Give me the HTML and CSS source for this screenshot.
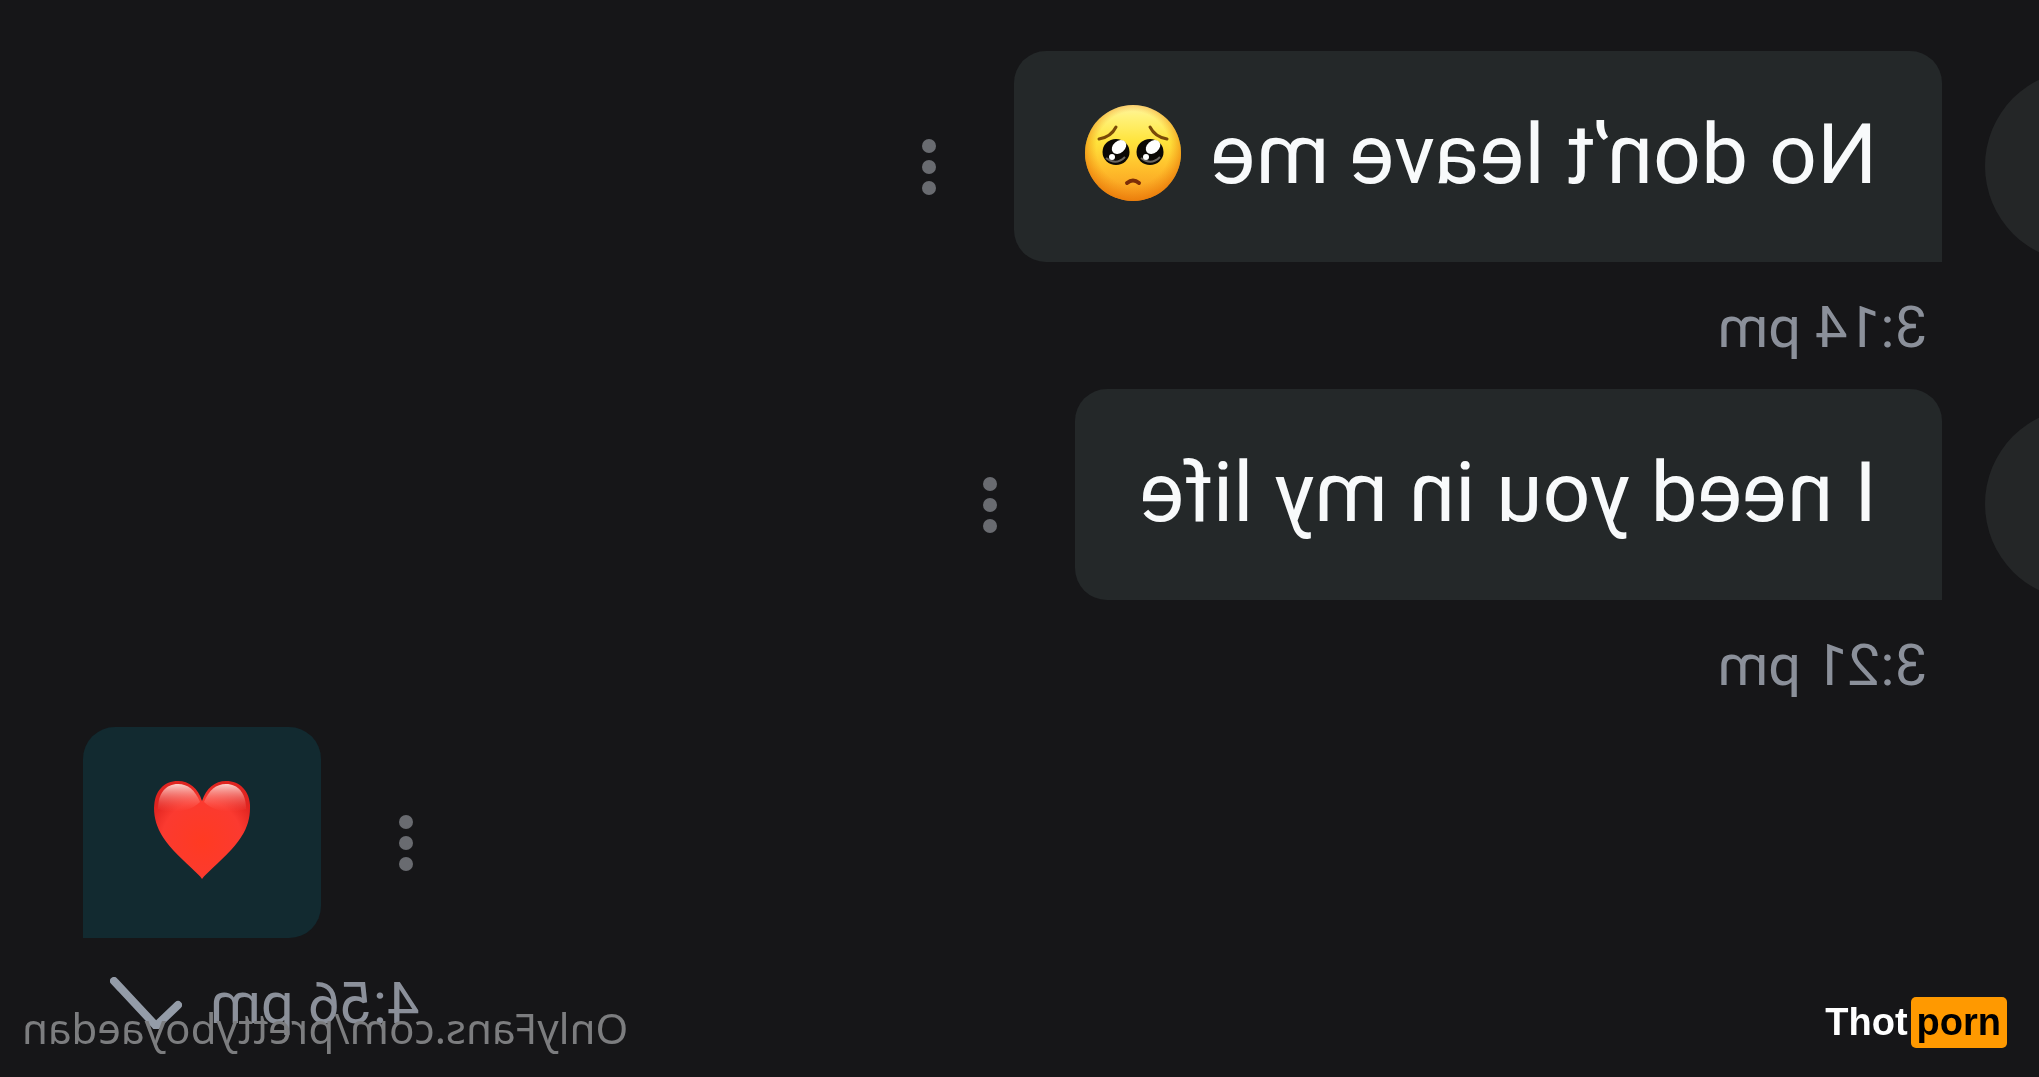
FILE: index.html
```
<!DOCTYPE html>
<html lang="en">
<head>
    <meta charset="UTF-8">
    <title>Messages</title>
    <link rel="stylesheet" href="styles.css">
</head>
<body>
    <main class="chat">
        <article class="message">
            <div class="row">
                <div class="avatar"></div>
                <div class="bubble">
                    <span>No don’t leave me</span>
                    <svg class="emoji" viewBox="0 0 96 96" role="img" aria-label="pleading face">
                        <defs>
                            <linearGradient id="face" x1="0" y1="0" x2="0" y2="1">
                                <stop offset="0" stop-color="#fff3a0"/>
                                <stop offset="0.12" stop-color="#fff27c"/>
                                <stop offset="0.38" stop-color="#ffe43c"/>
                                <stop offset="0.65" stop-color="#ffc02c"/>
                                <stop offset="1" stop-color="#f7941d"/>
                            </linearGradient>
                            <radialGradient id="rim" cx="0.5" cy="0.45" r="0.56">
                                <stop offset="0.68" stop-color="#f08a10" stop-opacity="0"/>
                                <stop offset="1" stop-color="#e87908" stop-opacity="0.9"/>
                            </radialGradient>
                        </defs>
                        <circle cx="48" cy="48" r="48" fill="url(#face)"/>
                        <circle cx="48" cy="48" r="48" fill="url(#rim)"/>
                        <path d="M14 34Q26 32 31 22M65 22Q70 32 82 34" fill="none" stroke="#7a4a08" stroke-width="3" stroke-linecap="round"/>
                        <ellipse cx="31" cy="47" rx="13.5" ry="13" fill="#0b0805"/>
                        <ellipse cx="65" cy="47" rx="13.5" ry="13" fill="#0b0805"/>
                        <path d="M21 52Q30 61 40 53M56 52Q65 61 75 53" fill="none" stroke="#6b6660" stroke-width="2"/>
                        <ellipse cx="28" cy="42" rx="8" ry="6" fill="#fff" transform="rotate(40 28 42)"/>
                        <ellipse cx="62" cy="42" rx="8" ry="6" fill="#fff" transform="rotate(40 62 42)"/>
                        <circle cx="35" cy="52" r="3" fill="#fff"/>
                        <circle cx="69" cy="52" r="3" fill="#fff"/>
                        <path d="M42 78Q48 73 54 78" fill="none" stroke="#7c2d08" stroke-width="4" stroke-linecap="round"/>
                    </svg>
                </div>
                <button class="more" type="button" aria-label="Message options"><i></i><i></i><i></i></button>
            </div>
            <div class="meta"><time>3:14 pm</time></div>
        </article>

        <article class="message">
            <div class="row">
                <div class="avatar"></div>
                <div class="bubble"><span>I need you in my life</span></div>
                <button class="more" type="button" aria-label="Message options"><i></i><i></i><i></i></button>
            </div>
            <div class="meta"><time>3:21 pm</time></div>
        </article>

        <article class="message sent">
            <div class="row">
                <button class="more" type="button" aria-label="Message options"><i></i><i></i><i></i></button>
                <div class="bubble">
                    <svg class="emoji" viewBox="0 0 96 96" role="img" aria-label="red heart">
                        <defs>
                            <radialGradient id="heart" cx="0.5" cy="0.62" r="0.6">
                                <stop offset="0" stop-color="#ff3a22"/>
                                <stop offset="0.7" stop-color="#fb3a30"/>
                                <stop offset="1" stop-color="#e02420"/>
                            </radialGradient>
                            <linearGradient id="shine" x1="0" y1="0" x2="0" y2="1">
                                <stop offset="0" stop-color="#ffe6e0" stop-opacity="0.9"/>
                                <stop offset="1" stop-color="#ff6a60" stop-opacity="0"/>
                            </linearGradient>
                        </defs>
                        <path d="M48 98C44 92 32 83 19 69C7 56 0 43 0 27C0 10 10 0 24 0C35 0 44 7 48 20C52 7 61 0 72 0C86 0 96 10 96 27C96 43 89 56 77 69C64 83 52 92 48 98Z" fill="url(#heart)"/>
                        <path d="M4 28C4 12 12 3 24 3C34 3 41 9 46 21C36 31 18 33 4 28Z" fill="url(#shine)"/>
                        <path d="M92 28C92 12 84 3 72 3C62 3 55 9 50 21C60 31 78 33 92 28Z" fill="url(#shine)"/>
                    </svg>
                </div>
            </div>
            <div class="meta">
                <time>4:56 pm</time>
                <svg class="check" viewBox="0 0 72 52" role="img" aria-label="Sent">
                    <path d="M4 28L26 49L68 4" fill="none" stroke="currentColor" stroke-width="8" stroke-linecap="round" stroke-linejoin="round"/>
                </svg>
            </div>
        </article>

        <div class="watermark">OnlyFans.com/prettyboyaedan</div>
    </main>

    <div class="logo"><span>Thot</span><span class="logo-box">porn</span></div>
</body>
</html>
```

FILE: styles.css
```
* {
    box-sizing: border-box;
}
body {
    margin: 0;
    background-color: #161618;
    font-family: Roboto, Arial, sans-serif;
}
/* the whole conversation is shown mirrored */
.chat {
    position: relative;
    min-height: 100vh;
    padding-top: 51px;
    overflow: hidden;
    transform: scaleX(-1);
}
.row {
    display: flex;
    align-items: flex-end;
}
.avatar {
    flex: none;
    width: 192px;
    height: 192px;
    margin-left: -138px;
    margin-right: 43px;
    border-radius: 50%;
    background-color: #242627;
}
.bubble {
    display: flex;
    align-items: center;
    gap: 24px;
    padding: 54px 65px 57px;
    border-radius: 32px 32px 32px 0;
    background-color: #242829;
    color: #f8fafb;
    font-size: 84px;
    line-height: 100px;
    white-space: nowrap;
}
.emoji {
    display: block;
    width: 96px;
    height: 96px;
    margin: 0 6px 4px;
    overflow: visible;
}
.more {
    display: flex;
    flex-direction: column;
    align-items: center;
    justify-content: center;
    gap: 7px;
    width: 48px;
    height: 190px;
    margin: 0 61px;
    padding: 0;
    border: none;
    background: none;
    cursor: pointer;
}
.more i {
    width: 14px;
    height: 14px;
    border-radius: 50%;
    background-color: #696b70;
}
.meta {
    display: flex;
    padding: 33px 112px 30px;
    color: #8b909a;
    font-size: 58px;
    line-height: 64px;
}
.sent .row {
    justify-content: flex-end;
    padding-right: 83px;
}
.sent .bubble {
    border-radius: 32px 32px 0 32px;
    background-color: #122a30;
}
.sent .meta {
    justify-content: flex-end;
    align-items: center;
    gap: 28px;
    padding-right: 110px;
}
.check {
    width: 72px;
    height: 52px;
    color: #949ca8;
}
.watermark {
    position: absolute;
    right: 22px;
    bottom: 25px;
    color: #7c7d7f;
    font-family: "Noto Sans", sans-serif;
    font-size: 42px;
    line-height: 48px;
}
.logo {
    position: absolute;
    right: 32px;
    bottom: 29px;
    display: flex;
    align-items: center;
    gap: 3px;
    color: #fff;
    font-family: "Liberation Sans", Arial, sans-serif;
    font-size: 38px;
    font-weight: bold;
    line-height: 51px;
}
.logo-box {
    padding: 0 6px;
    border-radius: 5px;
    background-color: #ff9900;
    color: #000;
}
```
